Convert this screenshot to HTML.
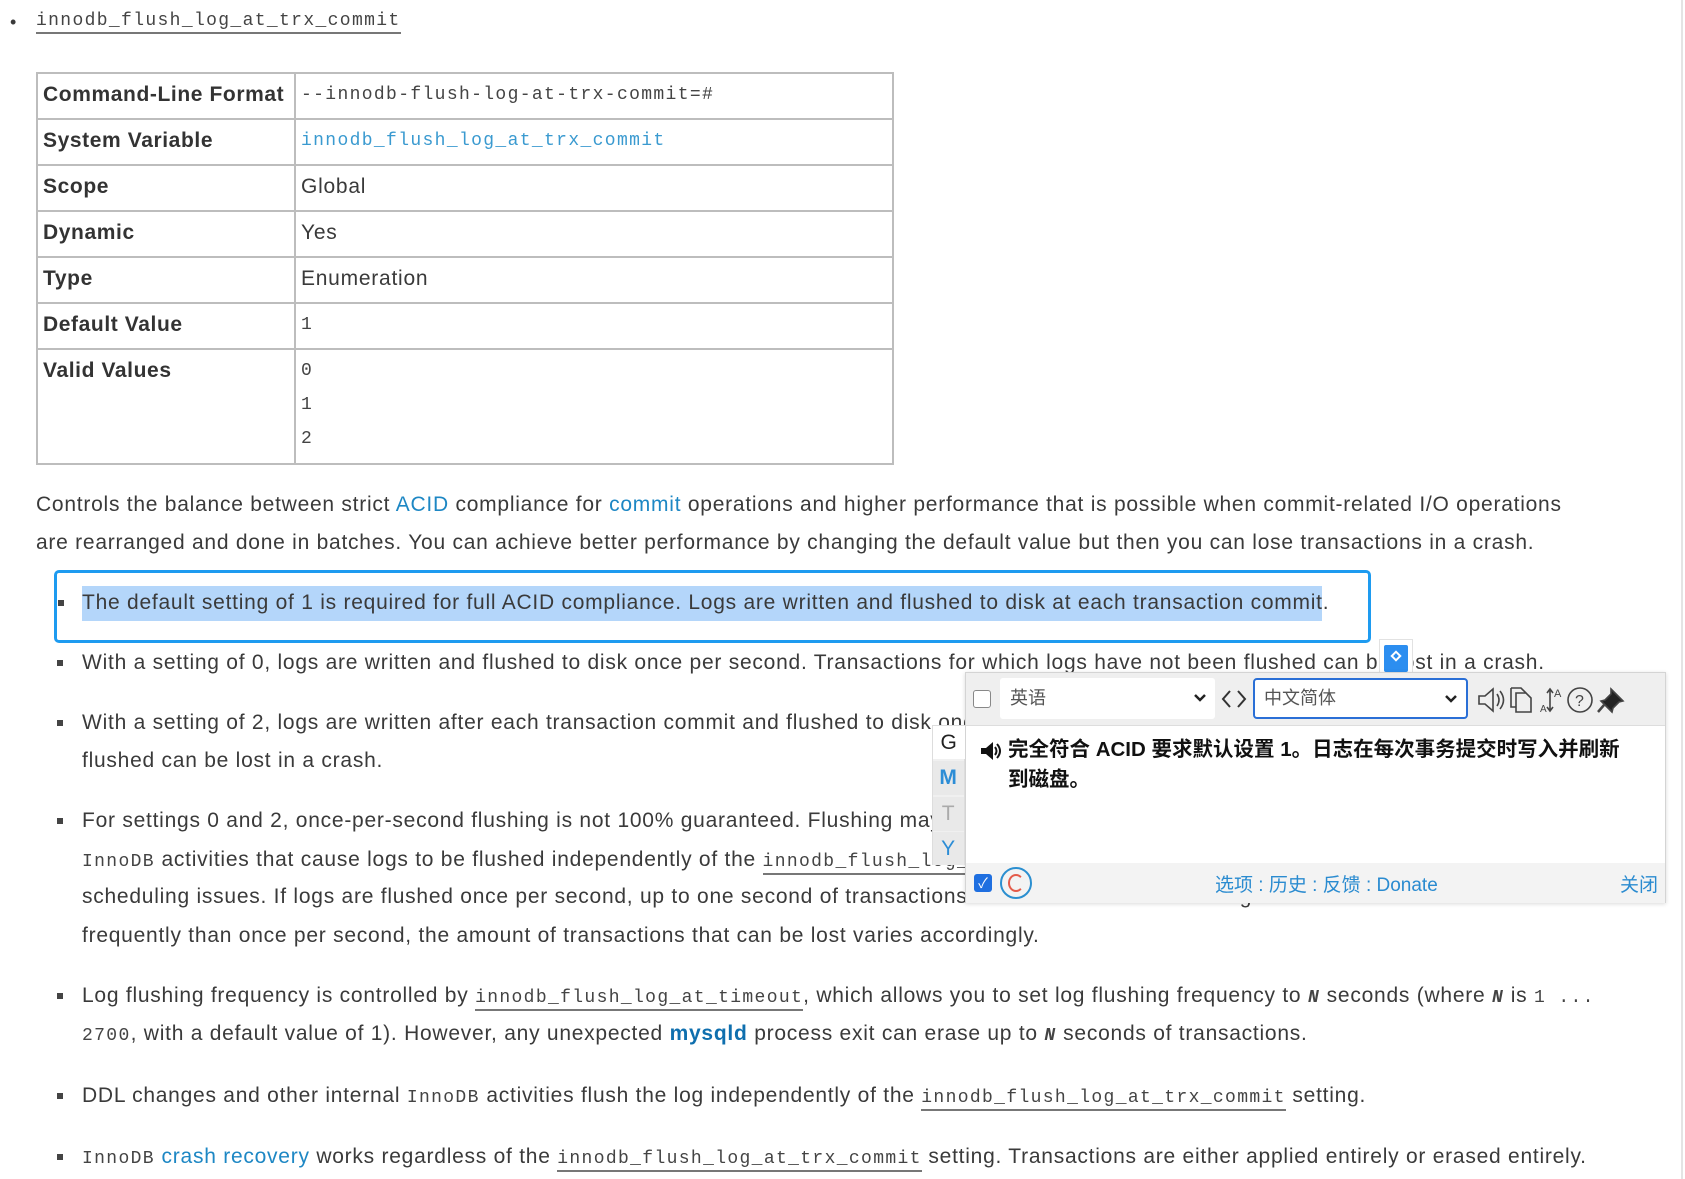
<!DOCTYPE html>
<html><head><meta charset="utf-8">
<style>
*{margin:0;padding:0;box-sizing:border-box}
body{width:1685px;height:1179px;background:#fff;position:relative;overflow:hidden;font-family:"Liberation Sans","Noto Sans CJK SC",sans-serif;color:#3a3a3a;font-size:21px;letter-spacing:0.75px}
.a{position:absolute;white-space:nowrap;line-height:28px}
.m{font-family:"Liberation Mono",monospace;font-size:18px;letter-spacing:1.35px;color:#444}
.u{border-bottom:2px solid #777;padding-bottom:1px}
.lk{color:#1d87c4}
table{position:absolute;left:36px;top:72px;width:858px;border-collapse:collapse}
td{border:2px solid #bdbdbd;vertical-align:top;padding:0 5px;height:46px;line-height:42px}
td.h{width:258px;font-weight:bold;color:#333;font-size:21px;letter-spacing:0.6px}
.sq{position:absolute;width:6px;height:6px;background:#444}
.pop{position:absolute;left:965px;top:672px;width:701px;height:231px;background:#fff;border:1px solid #d4d4d4;box-shadow:0 1px 4px rgba(0,0,0,.15);letter-spacing:0}
</style></head><body>
<div style="position:absolute;left:1681px;top:0;width:2px;height:1179px;background:#e4e4e4"></div>
<div class="a" style="left:10px;top:8px;font-size:18px">•</div>
<div class="a m" style="left:36px;top:7px"><span class="u">innodb_flush_log_at_trx_commit</span></div>

<table>
<tr><td class="h">Command-Line Format</td><td class="m">--innodb-flush-log-at-trx-commit=#</td></tr>
<tr><td class="h">System Variable</td><td class="m" style="color:#3a9ad0">innodb_flush_log_at_trx_commit</td></tr>
<tr><td class="h">Scope</td><td>Global</td></tr>
<tr><td class="h">Dynamic</td><td>Yes</td></tr>
<tr><td class="h">Type</td><td>Enumeration</td></tr>
<tr><td class="h">Default Value</td><td class="m">1</td></tr>
<tr><td class="h" style="height:115px">Valid Values</td><td class="m" style="line-height:34px;padding-top:4px">0<br>1<br>2</td></tr>
</table>

<div class="a" style="left:36px;top:491px">Controls the balance between strict <span class="lk">ACID</span> compliance for <span class="lk">commit</span> operations and higher performance that is possible when commit-related I/O operations</div>
<div class="a" style="left:36px;top:529px">are rearranged and done in batches. You can achieve better performance by changing the default value but then you can lose transactions in a crash.</div>

<div style="position:absolute;left:54px;top:570px;width:1317px;height:73px;border:3px solid #1e9bf0;border-radius:5px"></div>
<div style="position:absolute;left:82px;top:586px;width:1240px;height:35px;background:#b4d6fa"></div>
<div class="sq" style="left:58px;top:600px"></div>
<div class="a" style="left:82px;top:589px">The default setting of 1 is required for full ACID compliance. Logs are written and flushed to disk at each transaction commit.</div>

<div class="sq" style="left:57px;top:660px"></div>
<div class="a" style="left:82px;top:649px">With a setting of 0, logs are written and flushed to disk once per second. Transactions for which logs have not been flushed can be lost in a crash.</div>

<div class="sq" style="left:57px;top:720px"></div>
<div class="a" style="left:82px;top:709px">With a setting of 2, logs are written after each transaction commit and flushed to disk once per second. Transactions for which logs have not been</div>
<div class="a" style="left:82px;top:747px">flushed can be lost in a crash.</div>

<div class="sq" style="left:57px;top:818px"></div>
<div class="a" style="left:82px;top:807px">For settings 0 and 2, once-per-second flushing is not 100% guaranteed. Flushing may occur more frequently due to DDL changes and other internal</div>
<div class="a" style="left:82px;top:846px"><span class="m">InnoDB</span> activities that cause logs to be flushed independently of the <span class="m u">innodb_flush_log_at_trx_commit</span> setting, and sometimes less frequently due to</div>
<div class="a" style="left:82px;top:883px">scheduling issues. If logs are flushed once per second, up to one second of transactions can be lost in a crash. If logs are flushed more or less</div>
<div class="a" style="left:82px;top:922px">frequently than once per second, the amount of transactions that can be lost varies accordingly.</div>

<div class="sq" style="left:57px;top:993px"></div>
<div class="a" style="left:82px;top:982px">Log flushing frequency is controlled by <span class="m u">innodb_flush_log_at_timeout</span>, which allows you to set log flushing frequency to <i class="m" style="font-weight:bold">N</i> seconds (where <i class="m" style="font-weight:bold">N</i> is <span class="m">1 ...</span></div>
<div class="a" style="left:82px;top:1020px"><span class="m">2700</span>, with a default value of 1). However, any unexpected <b style="color:#0f6fae">mysqld</b> process exit can erase up to <i class="m" style="font-weight:bold">N</i> seconds of transactions.</div>

<div class="sq" style="left:57px;top:1093px"></div>
<div class="a" style="left:82px;top:1082px">DDL changes and other internal <span class="m">InnoDB</span> activities flush the log independently of the <span class="m u">innodb_flush_log_at_trx_commit</span> setting.</div>

<div class="sq" style="left:57px;top:1154px"></div>
<div class="a" style="left:82px;top:1143px"><span class="m">InnoDB</span> <span class="lk">crash recovery</span> works regardless of the <span class="m u">innodb_flush_log_at_trx_commit</span> setting. Transactions are either applied entirely or erased entirely.</div>

<!-- flag icon -->
<div style="position:absolute;left:1379px;top:639px;width:34px;height:36px;background:#fff;border:1px solid #e2e2e2"></div>
<div style="position:absolute;left:1384px;top:645px;width:24px;height:27px;background:#2c8ef0;border-radius:2px"><div style="position:absolute;left:8px;top:7px;width:8px;height:8px;border:2px solid #fff;transform:rotate(45deg)"></div></div>

<!-- popup -->
<div class="pop">
 <div style="position:absolute;left:0;top:0;width:100%;height:53px;background:#efefef;border-bottom:1px solid #ddd"></div>
 <div style="position:absolute;left:7px;top:17px;width:18px;height:18px;border:1.5px solid #888;border-radius:3px;background:#fff"></div>
 <div style="position:absolute;left:34px;top:5px;width:215px;height:41px;background:#fff;border-radius:3px;font-size:18px;line-height:41px;padding-left:10px;color:#555">英语<svg style="position:absolute;right:8px;top:15px" width="14" height="10" viewBox="0 0 14 10"><path d="M2 2l5 5 5-5" fill="none" stroke="#222" stroke-width="2.5"/></svg></div>
 <svg style="position:absolute;left:254px;top:14px" width="28" height="24" viewBox="0 0 28 24" fill="none" stroke="#333" stroke-width="2"><path d="M10 4l-7 8 7 8M18 4l7 8-7 8"/></svg>
 <div style="position:absolute;left:287px;top:5px;width:215px;height:41px;background:#fff;border:2px solid #2a6fd6;border-radius:4px;font-size:18px;line-height:37px;padding-left:9px;color:#555">中文简体<svg style="position:absolute;right:8px;top:14px" width="14" height="10" viewBox="0 0 14 10"><path d="M2 2l5 5 5-5" fill="none" stroke="#222" stroke-width="2.5"/></svg></div>
 <svg style="position:absolute;left:510px;top:12px" width="190" height="30" viewBox="0 0 190 30" fill="none" stroke="#444" stroke-width="1.6">
  <path d="M3 11h6l8-7v22l-8-7H3z"/><path d="M21 9q4 6 0 12M24 6q7 9 0 18"/>
  <path d="M40 8h10l5 5v14H40z"/><path d="M35 3h10l5 5M35 3v19h5"/>
  <text x="64" y="27" font-size="10" fill="#444" stroke="none" font-family="Liberation Sans">A</text><path d="M74 4v22M71 8l3-4 3 4M71 22l3 4 3-4"/><text x="78" y="12" font-size="11" fill="#444" stroke="none" font-family="Liberation Sans">A</text>
  <circle cx="104" cy="15" r="12"/><text x="99" y="21" font-size="16" fill="#444" stroke="none" font-family="Liberation Sans">?</text>
  <path d="M135 4l12 12-4 1-6 6-1 4-11-11 4-1 6-6z" fill="#222"/><path d="M128 20l-6 7" stroke-width="2.5"/>
 </svg>
 <svg style="position:absolute;left:14px;top:68px" width="22" height="20" viewBox="0 0 22 20"><path d="M1 7h5l7-6v18l-7-6H1z" fill="#111"/><path d="M15 6q3 4 0 8M17 3q6 7 0 14" fill="none" stroke="#111" stroke-width="2"/></svg>
 <div style="position:absolute;left:42px;top:62px;font-size:20.5px;font-weight:bold;color:#111;line-height:30px;width:650px">完全符合 ACID 要求默认设置 1。日志在每次事务提交时写入并刷新<br>到磁盘。</div>
 <div style="position:absolute;left:0;top:190px;width:100%;height:40px;background:#f3f3f3"></div>
 <div style="position:absolute;left:8px;top:201px;width:18px;height:18px;background:#1f6fe0;border-radius:3px;color:#fff;font-size:14px;line-height:18px;text-align:center">✓</div>
 <div style="position:absolute;left:34px;top:194px;width:32px;height:32px;border:2.5px solid #2b8fd0;border-radius:50%"><div style="position:absolute;left:6px;top:5px;width:16px;height:18px;border:2px solid #e45b4a;border-radius:50%;border-right-color:transparent"></div></div>
 <div style="position:absolute;left:249px;top:197px;font-size:19px;color:#2a8bd0">选项 : 历史 : 反馈 : Donate</div>
 <div style="position:absolute;left:654px;top:197px;font-size:19px;color:#2a8bd0">关闭</div>
</div>
<!-- side tabs -->
<div style="position:absolute;left:932px;top:725px;width:33px;height:140px;background:#f0f0f0;border:1px solid #ddd"></div>
<div style="position:absolute;left:933px;top:726px;width:32px;height:33px;background:#fff;text-align:center;font-size:21px;line-height:33px;color:#222">G</div>
<div style="position:absolute;left:933px;top:761px;width:31px;height:34px;background:#e9e9e9;text-align:center;font-size:21px;line-height:34px;color:#2c8dd6;font-weight:bold">M</div>
<div style="position:absolute;left:933px;top:797px;width:31px;height:34px;background:#e9e9e9;text-align:center;font-size:21px;line-height:34px;color:#aaa">T</div>
<div style="position:absolute;left:933px;top:832px;width:31px;height:33px;background:#e9e9e9;text-align:center;font-size:21px;line-height:33px;color:#2c8dd6">Y</div>
</body></html>
